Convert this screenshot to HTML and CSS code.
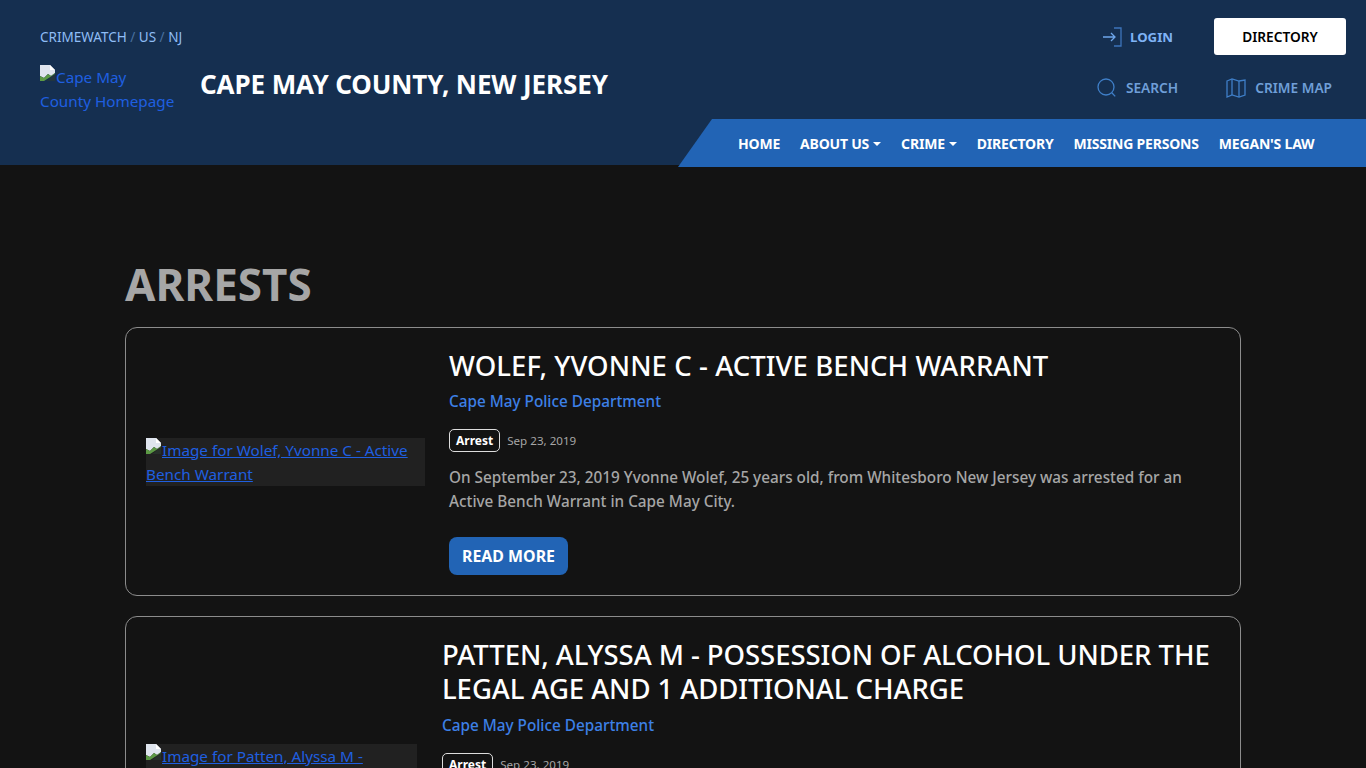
FILE: index.html
```html
<!DOCTYPE html>
<html lang="en">
<head>
    <meta charset="UTF-8">
    <meta name="viewport" content="width=device-width, initial-scale=1.0">
    <title>Cape May County, New Jersey - Arrests</title>
    <link rel="stylesheet" href="styles.css">
</head>
<body>
    <header class="site-header">
        <div class="header-left">
            <div class="breadcrumbs">
                <a href="#">CRIMEWATCH</a> <span>/</span> <a href="#">US</a> <span>/</span> <a href="#">NJ</a>
            </div>
            <div class="brand">
                <a class="brand-logo" href="#">
                    <svg class="broken-img" viewBox="0 0 16 16"><path d="M0 0h10l5 5v3l-4 3-3-2-4 4-4-2z" fill="#dfe5ee"/><path d="M10 0l5 5h-5z" fill="#fff"/><path d="M0 11l4 2 4-4 3 2 4-3v1L4 16H0z" fill="#5c9a45"/><path d="M6 16l9-7v7z" fill="#2c3b30" opacity=".6"/></svg>Cape May County Homepage
                </a>
                <h1 class="county-name">CAPE MAY COUNTY, NEW JERSEY</h1>
            </div>
        </div>
        <div class="header-right">
            <div class="top-row">
                <a class="login" href="#">
                    <svg class="icon" viewBox="0 0 20 20" fill="none" stroke-width="1.3"><path d="M12 1h7v18h-7" stroke="#3d74bb"/><path d="M1 10h12M9 6l4 4-4 4" stroke="#6ea6ea"/></svg>
                    LOGIN
                </a>
                <a class="directory-btn" href="#">DIRECTORY</a>
            </div>
            <div class="tool-row">
                <a href="#">
                    <svg class="icon" viewBox="0 0 20 20" fill="none" stroke="#3f7fc8" stroke-width="1.3"><circle cx="9" cy="9" r="8"/><path d="M14.8 14.8l3.4 3.6"/></svg>
                    SEARCH
                </a>
                <a href="#">
                    <svg class="icon" viewBox="0 0 20 20" fill="none" stroke="#3f7fc8" stroke-width="1.3"><path d="M1 3l5-2 7 2 6-1v15l-6 2-7-2-5 2z"/><path d="M6 1v16M13 3v16"/></svg>
                    CRIME MAP
                </a>
            </div>
            <nav class="main-nav">
                <a href="#">HOME</a>
                <a class="caret" href="#">ABOUT US</a>
                <a class="caret" href="#">CRIME</a>
                <a href="#">DIRECTORY</a>
                <a href="#">MISSING PERSONS</a>
                <a href="#">MEGAN'S LAW</a>
            </nav>
        </div>
    </header>

    <main class="content">
        <h2 class="page-title">ARRESTS</h2>

        <article class="arrest-card">
            <a class="arrest-thumb" href="#">
                <svg class="broken-img" viewBox="0 0 16 16"><path d="M0 0h10l5 5v3l-4 3-3-2-4 4-4-2z" fill="#dfe5ee"/><path d="M10 0l5 5h-5z" fill="#fff"/><path d="M0 11l4 2 4-4 3 2 4-3v1L4 16H0z" fill="#5c9a45"/><path d="M6 16l9-7v7z" fill="#2c3b30" opacity=".6"/></svg>Image for Wolef, Yvonne C - Active Bench Warrant
            </a>
            <div class="arrest-body">
                <h3>WOLEF, YVONNE C - ACTIVE BENCH WARRANT</h3>
                <a class="agency" href="#">Cape May Police Department</a>
                <div class="meta">
                    <span class="tag">Arrest</span>
                    <span class="date">Sep 23, 2019</span>
                </div>
                <p>On September 23, 2019 Yvonne Wolef, 25 years old, from Whitesboro New Jersey was arrested for an Active Bench Warrant in Cape May City.</p>
                <a class="read-more" href="#">READ MORE</a>
            </div>
        </article>

        <article class="arrest-card arrest-card-long">
            <a class="arrest-thumb" href="#">
                <svg class="broken-img" viewBox="0 0 16 16"><path d="M0 0h10l5 5v3l-4 3-3-2-4 4-4-2z" fill="#dfe5ee"/><path d="M10 0l5 5h-5z" fill="#fff"/><path d="M0 11l4 2 4-4 3 2 4-3v1L4 16H0z" fill="#5c9a45"/><path d="M6 16l9-7v7z" fill="#2c3b30" opacity=".6"/></svg>Image for Patten, Alyssa M - Possession of Alcohol Under the Legal Age and 1 Additional Charge
            </a>
            <div class="arrest-body">
                <h3>PATTEN, ALYSSA M - POSSESSION OF ALCOHOL UNDER THE LEGAL AGE AND 1 ADDITIONAL CHARGE</h3>
                <a class="agency" href="#">Cape May Police Department</a>
                <div class="meta">
                    <span class="tag">Arrest</span>
                    <span class="date">Sep 23, 2019</span>
                </div>
                <p>On September 23, 2019 Alyssa Patten, from New Jersey was arrested for Possession of Alcohol Under the Legal Age and 1 additional charge in Cape May City. This arrest was posted by the Cape May Police Department, and the listing is one of the arrests shown for Cape May County, New Jersey.</p>
                <a class="read-more" href="#">READ MORE</a>
            </div>
        </article>
    </main>
</body>
</html>
```

FILE: styles.css
```css
html {
    height: 100%;
    overflow: hidden;
}
body {
    margin: 0;
    height: 100%;
    overflow: hidden;
    background-color: #131313;
    color: #fff;
    font-family: "Noto Sans", "Open Sans", sans-serif;
    font-size: 16px;
    line-height: 24px;
}
a {
    text-decoration: none;
}
.site-header {
    display: flex;
    justify-content: space-between;
    height: 165px;
    background-color: #152f50;
}
.header-left {
    padding: 25px 0 0 40px;
}
.breadcrumbs {
    font-size: 13.5px;
    color: #4a6f9f;
}
.breadcrumbs a {
    color: #8fbdf5;
}
.brand {
    display: flex;
    margin-top: 16px;
}
.brand-logo {
    width: 140px;
    font-size: 15.25px;
    color: #1f5fe0;
}
.broken-img {
    width: 16px;
    height: 16px;
    vertical-align: 2px;
}
.county-name {
    margin: 4px 0 0 20px;
    font-size: 26px;
    line-height: 30px;
    font-weight: 700;
    letter-spacing: -0.1px;
}
.header-right {
    display: flex;
    flex-direction: column;
    align-items: flex-end;
    width: 688px;
    height: 167px;
}
.icon {
    width: 20px;
    height: 20px;
}
.top-row {
    display: flex;
    align-items: center;
    gap: 41px;
    margin: 18px 20px 0 0;
}
.login {
    display: flex;
    align-items: center;
    gap: 8px;
    font-size: 13.2px;
    font-weight: 700;
    color: #7fb3f5;
}
.directory-btn {
    width: 132px;
    height: 37px;
    line-height: 37px;
    text-align: center;
    background-color: #fff;
    border-radius: 3px;
    font-size: 13.7px;
    font-weight: 600;
    color: #000;
}
.tool-row {
    display: flex;
    gap: 48px;
    margin: 14px 34px 0 0;
}
.tool-row a {
    display: flex;
    align-items: center;
    gap: 9px;
    height: 38px;
    font-size: 13.7px;
    font-weight: 600;
    color: #6f9fd8;
}
.main-nav {
    display: flex;
    align-items: center;
    gap: 20px;
    box-sizing: border-box;
    width: 688px;
    height: 48px;
    margin-top: auto;
    padding: 2px 0 0 60px;
    background-color: #2264b5;
    clip-path: polygon(34px 0, 100% 0, 100% 100%, 0 100%);
}
.main-nav a {
    font-size: 14px;
    font-weight: 700;
    color: #fff;
    letter-spacing: -0.2px;
}
.caret::after {
    content: "";
    display: inline-block;
    margin-left: 4px;
    vertical-align: 3px;
    border-top: 4px solid #fff;
    border-left: 4px solid transparent;
    border-right: 4px solid transparent;
}
.content {
    width: 1116px;
    margin: 0 auto;
    padding-top: 92px;
}
.page-title {
    margin: 0 0 16px;
    font-size: 44px;
    line-height: 54px;
    font-weight: 700;
    color: #a6a6a6;
}
.arrest-card {
    display: flex;
    align-items: center;
    gap: 24px;
    box-sizing: border-box;
    margin-bottom: 20px;
    padding: 20px;
    border: 1px solid #8c8c8c;
    border-radius: 12px;
}
.arrest-thumb {
    flex: none;
    width: 279px;
    background-color: #212121;
    font-size: 15.25px;
    color: #1f5fe0;
    text-decoration: underline;
}
.arrest-card-long {
    gap: 25px;
}
.arrest-card-long .arrest-thumb {
    width: 271px;
}
.arrest-body {
    flex: 1;
    min-width: 0;
}
.arrest-body h3 {
    margin: 1px 0 6px;
    font-size: 27.5px;
    line-height: 34px;
    font-weight: 500;
    letter-spacing: 0.08px;
    color: #fff;
}
.arrest-card-long .arrest-body h3 {
    margin-bottom: 7px;
    letter-spacing: -0.06px;
}
.agency {
    display: block;
    font-size: 15.3px;
    font-weight: 500;
    color: #3d80e6;
}
.meta {
    display: flex;
    align-items: center;
    gap: 7px;
    margin-top: 14px;
}
.tag {
    box-sizing: border-box;
    height: 23px;
    padding: 0 6px;
    border: 1px solid #ddd;
    border-radius: 5px;
    font-size: 12px;
    line-height: 22px;
    font-weight: 700;
}
.date {
    padding-top: 2px;
    font-size: 11.6px;
    color: #a6a6a6;
}
.arrest-body p {
    margin: 12px 0 0;
    font-size: 15.3px;
    font-weight: 500;
    color: #a6a6a6;
}
.read-more {
    display: inline-block;
    margin-top: 24px;
    padding: 0 13px;
    height: 38px;
    line-height: 38px;
    background-color: #2264b5;
    border-radius: 8px;
    font-size: 15.9px;
    font-weight: 700;
    color: #fff;
}
```
